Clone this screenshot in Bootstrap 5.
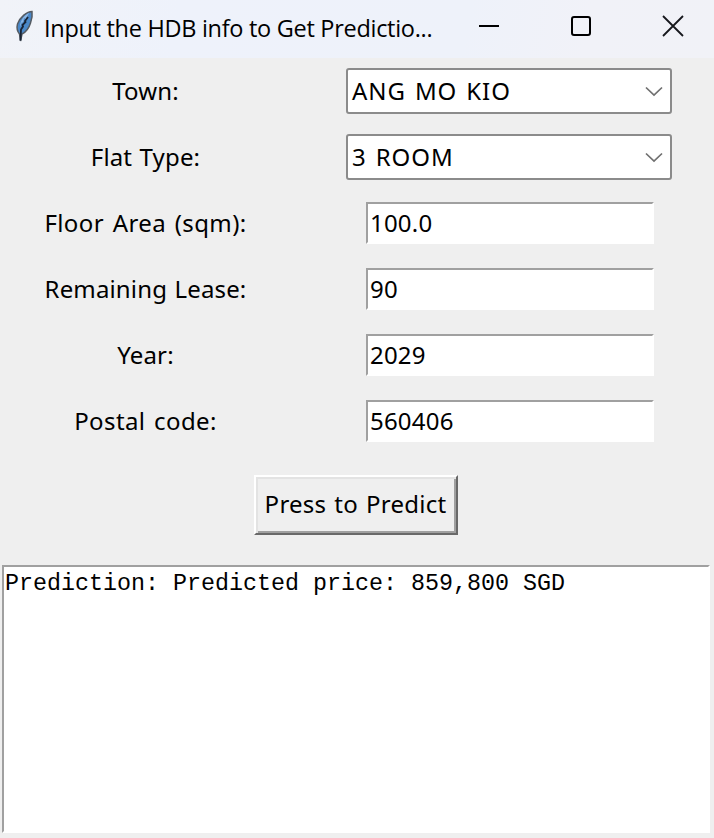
<!DOCTYPE html>
<html lang="en">
<head>
<meta charset="utf-8">
<meta name="viewport" content="width=device-width, initial-scale=1">
<title>Input the HDB info to Get Prediction</title>
<link href="https://cdn.jsdelivr.net/npm/bootstrap@5.3.0/dist/css/bootstrap.min.css" rel="stylesheet">
<style>
body{background:#efefef;color:#000;font-family:"Noto Sans","Open Sans",sans-serif;font-size:24px;line-height:34px;overflow:hidden}
.app-window{width:714px;height:838px}
.titlebar{height:58px;background:linear-gradient(100deg,#f1f3f8 0%,#eef2fb 25%,#eef2fa 65%,#f1f2f8 82%,#f1f2f7 100%);padding:0 30px 6px 14px}
.title-text{font-family:"Open Sans","Noto Sans",sans-serif;font-size:23.5px;letter-spacing:-.29px;width:434px;margin-left:9px;padding-top:4px;white-space:nowrap}
.form-line{height:66px}
.label-cell{width:290px;padding-left:1px;white-space:nowrap;word-spacing:1px;letter-spacing:.15px}
.label-floor{letter-spacing:.4px;word-spacing:2px}
.field-cell{width:424px;padding-left:14px}
.combo{width:326px;height:46px;background:#fff;border:2px solid #8b8b8b;border-radius:3px;padding:0 7px 0 4px;letter-spacing:.9px;word-spacing:2px}
.entry{width:288px;height:42px;background:#fff;border:2px solid #fff;border-top-color:#a0a0a0;border-left-color:#a0a0a0;padding-left:2px;margin-left:2px;letter-spacing:.2px}
.press{width:204px;height:60px;margin:21px 2px 0 0;padding:0 1px 2px 0;background:#efefef;color:#000;font:inherit;white-space:nowrap;letter-spacing:.25px;word-spacing:1.5px;border:2px solid;border-color:#fff #696969 #696969 #fff;box-shadow:inset 2px 2px #e3e3e3,inset -2px -2px #a0a0a0}
.output{margin:30px 4px 0 2px;height:268px;background:#fff;border:2px solid #fff;border-top-color:#a0a0a0;border-left-color:#a0a0a0;font-family:"Liberation Mono",monospace;font-size:23.33px;line-height:34px;padding-left:1px;white-space:pre}
</style>
<script src="https://cdn.jsdelivr.net/npm/bootstrap@5.3.0/dist/js/bootstrap.bundle.min.js"></script>
</head>
<body>
<div class="app-window d-flex flex-column">
  <header class="titlebar d-flex align-items-center">
    <svg width="21" height="34" viewBox="0 0 21 34">
      <path d="M18 2.500C13 2.500 6 8 3.500 15c-1 4-.5 7 2 10l1 7 1.500-7c4-2 7-6 8.500-11C18 10 18.500 6 18 2.500z" fill="#4a88c8" stroke="#555b62" stroke-width="1.500"/>
      <path d="M15 4c-5 2-9 8-9 14l2-5 1 1 1-5 2 1z" fill="#8bb5e2"/>
      <path d="M14 8l-3 4 .5 1-3 3 .5 1.500-2 3-.5 11" fill="none" stroke="#182334" stroke-width="1.800"/>
    </svg>
    <div class="title-text">Input the HDB info to Get Predictio...</div>
    <div class="d-flex align-items-center justify-content-between flex-grow-1">
      <svg width="22" height="22" viewBox="0 0 22 22"><path d="M1 11h20" stroke="#000" stroke-width="2"/></svg>
      <svg width="22" height="22" viewBox="0 0 22 22"><rect x="2" y="2" width="18" height="18" rx="2" fill="none" stroke="#000" stroke-width="2"/></svg>
      <svg width="22" height="22" viewBox="0 0 22 22"><path d="M1 1l20 20M21 1L1 21" stroke="#16181c" stroke-width="1.800"/></svg>
    </div>
  </header>
  <main>
    <div class="form-line d-flex align-items-center">
      <div class="label-cell text-center">Town:</div>
      <div class="field-cell d-flex justify-content-center"><div class="combo d-flex align-items-center justify-content-between"><span>ANG MO KIO</span><svg width="18" height="12" viewBox="0 0 18 12"><path d="M1 2.500l8 7.500 8-7.500" fill="none" stroke="#707070" stroke-width="1.700"/></svg></div></div>
    </div>
    <div class="form-line d-flex align-items-center">
      <div class="label-cell text-center">Flat Type:</div>
      <div class="field-cell d-flex justify-content-center"><div class="combo d-flex align-items-center justify-content-between"><span>3 ROOM</span><svg width="18" height="12" viewBox="0 0 18 12"><path d="M1 2.500l8 7.500 8-7.500" fill="none" stroke="#707070" stroke-width="1.700"/></svg></div></div>
    </div>
    <div class="form-line d-flex align-items-center">
      <div class="label-cell label-floor text-center">Floor Area (sqm):</div>
      <div class="field-cell d-flex justify-content-center"><div class="entry d-flex align-items-center">100.0</div></div>
    </div>
    <div class="form-line d-flex align-items-center">
      <div class="label-cell text-center">Remaining Lease:</div>
      <div class="field-cell d-flex justify-content-center"><div class="entry d-flex align-items-center">90</div></div>
    </div>
    <div class="form-line d-flex align-items-center">
      <div class="label-cell text-center">Year:</div>
      <div class="field-cell d-flex justify-content-center"><div class="entry d-flex align-items-center">2029</div></div>
    </div>
    <div class="form-line d-flex align-items-center">
      <div class="label-cell label-floor text-center">Postal code:</div>
      <div class="field-cell d-flex justify-content-center"><div class="entry d-flex align-items-center">560406</div></div>
    </div>
    <div class="d-flex justify-content-center"><button type="button" class="press">Press to Predict</button></div>
    <div class="output">Prediction: Predicted price: 859,800 SGD</div>
  </main>
</div>
</body>
</html>
